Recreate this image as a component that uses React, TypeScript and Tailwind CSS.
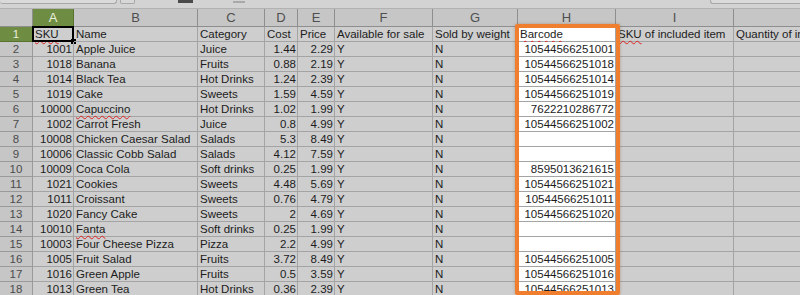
import React from "react";

const COL_W = [
  "w-[33px]",
  "w-[41px]",
  "w-[124px]",
  "w-[67px]",
  "w-[33px]",
  "w-[37px]",
  "w-[98px]",
  "w-[85px]",
  "w-[98px]",
  "w-[118px]",
  "w-[140px]",
];

const LETTERS = ["A", "B", "C", "D", "E", "F", "G", "H", "I", "J"];

// which columns are right-aligned numbers
const NUMERIC = [true, false, false, true, true, false, false, true, false, false];

type Row = string[];

const HEADER: Row = [
  "SKU",
  "Name",
  "Category",
  "Cost",
  "Price",
  "Available for sale",
  "Sold by weight",
  "Barcode",
  "SKU of included item",
  "Quantity of included item",
];

const ROWS: Row[] = [
  ["1001", "Apple Juice", "Juice", "1.44", "2.29", "Y", "N", "10544566251001"],
  ["1018", "Banana", "Fruits", "0.88", "2.19", "Y", "N", "10544566251018"],
  ["1014", "Black Tea", "Hot Drinks", "1.24", "2.39", "Y", "N", "10544566251014"],
  ["1019", "Cake", "Sweets", "1.59", "4.59", "Y", "N", "10544566251019"],
  ["10000", "Capuccino", "Hot Drinks", "1.02", "1.99", "Y", "N", "7622210286772"],
  ["1002", "Carrot Fresh", "Juice", "0.8", "4.99", "Y", "N", "10544566251002"],
  ["10008", "Chicken Caesar Salad", "Salads", "5.3", "8.49", "Y", "N", ""],
  ["10006", "Classic Cobb Salad", "Salads", "4.12", "7.59", "Y", "N", ""],
  ["10009", "Coca Cola", "Soft drinks", "0.25", "1.99", "Y", "N", "8595013621615"],
  ["1021", "Cookies", "Sweets", "4.48", "5.69", "Y", "N", "10544566251021"],
  ["1011", "Croissant", "Sweets", "0.76", "4.79", "Y", "N", "10544566251011"],
  ["1020", "Fancy Cake", "Sweets", "2", "4.69", "Y", "N", "10544566251020"],
  ["10010", "Fanta", "Soft drinks", "0.25", "1.99", "Y", "N", ""],
  ["10003", "Four Cheese Pizza", "Pizza", "2.2", "4.99", "Y", "N", ""],
  ["1005", "Fruit Salad", "Fruits", "3.72", "8.49", "Y", "N", "10544566251005"],
  ["1016", "Green Apple", "Fruits", "0.5", "3.59", "Y", "N", "10544566251016"],
  ["1013", "Green Tea", "Hot Drinks", "0.36", "2.39", "Y", "N", "10544566251013"],
];

// words the spell checker flags
const MISSPELT = new Set(["Capuccino", "Fanta", "Barcode"]);

function Squiggle({ children }: { children: React.ReactNode }) {
  return <span className="underline decoration-wavy decoration-[#d22] decoration-1 underline-offset-2">{children}</span>;
}

function Cell({ col, value, header }: { col: number; value: string; header?: boolean }) {
  const numeric = !header && NUMERIC[col];
  const white = col === 7;
  let content: React.ReactNode = value;
  if (MISSPELT.has(value)) content = <Squiggle>{value}</Squiggle>;
  if (header && col === 8) {
    content = (
      <>
        <Squiggle>SKU</Squiggle> of included item
      </>
    );
  }
  return (
    <div
      className={`${COL_W[col + 1]} relative h-full shrink-0 overflow-visible whitespace-nowrap border-b border-r border-[#a4a4a4] leading-[14px] ${
        white ? "bg-white" : ""
      } ${numeric ? "pr-[1px] text-right" : "pl-[2px] text-left"}`}
    >
      {header && col === 0 ? (
        <>
          <Squiggle>SKU</Squiggle>
          <div className="pointer-events-none absolute -left-[1px] -top-[1px] h-[16px] w-[42px] border-2 border-black" />
          <div className="absolute -right-[3px] -bottom-[3px] h-[5px] w-[5px] bg-black" />
        </>
      ) : (
        content
      )}
    </div>
  );
}

function DataRow({ num, cells, header }: { num: number; cells: Row; header?: boolean }) {
  return (
    <div className="flex h-[15px] shrink-0">
      <div
        className={`${COL_W[0]} h-full shrink-0 border-b border-r text-center leading-[14px] ${
          header ? "border-[#58732f] bg-[#6f8c43] text-[#e9efdc]" : "border-[#9a9a9a] bg-[#c6c6c6] text-[#4c4c4c]"
        }`}
      >
        {num}
      </div>
      {LETTERS.map((_, i) => (
        <Cell key={i} col={i} value={cells[i] ?? ""} header={header} />
      ))}
    </div>
  );
}

export default function App() {
  return (
    <div className="relative h-[295px] w-[800px] overflow-hidden bg-[#cecece] font-['Liberation_Sans',Arial,sans-serif] text-[11.5px] text-[#1c1c1c]">
      {/* toolbar remnant */}
      <div className="relative flex h-[9px] border-b border-[#b2b2b2] bg-[#d3d3d3]">
        <div className="h-[4px] w-[117px] rounded-b-[3px] border-b border-r border-[#a8a8a8] bg-[#dadada]" />
        <div className="ml-[3px] h-[4px] w-[15px] rounded-b-[2px] border-x border-b border-[#a8a8a8] bg-[#d8d8d8]" />
        <div className="ml-[43px] h-[3px] w-[15px] bg-[#4a4a4a]" />
        <div className="ml-[40px] mt-[1px] h-[2px] w-[12px] bg-[#a9a9a9]" />
        <div className="ml-auto h-[4px] w-[90px] rounded-bl-[3px] border-b border-l border-[#a8a8a8] bg-[#dadada]" />
      </div>

      {/* column letters */}
      <div className="flex h-[18px] border-b border-[#8e8e8e] bg-[#c6c6c6] text-[13px] text-[#4f4f4f]">
        <div className={`${COL_W[0]} shrink-0 border-r border-[#8e8e8e]`} />
        {LETTERS.map((l, i) => (
          <div
            key={l}
            className={`${COL_W[i + 1]} shrink-0 border-r text-center leading-[17px] ${
              i === 0 ? "border-[#58732f] bg-[#6f8c43] text-[#e9efdc]" : "border-[#8e8e8e]"
            }`}
          >
            {l}
          </div>
        ))}
      </div>

      <DataRow num={1} cells={HEADER} header />
      {ROWS.map((r, i) => (
        <DataRow key={i} num={i + 2} cells={r} />
      ))}

      {/* highlight round the Barcode column */}
      <div className="pointer-events-none absolute left-[515px] top-[24px] h-[271px] w-[105px] rounded-[2px] border-4 border-[#f07e2f] shadow-[0_0_3px_rgba(120,60,0,0.35)]" />
    </div>
  );
}
